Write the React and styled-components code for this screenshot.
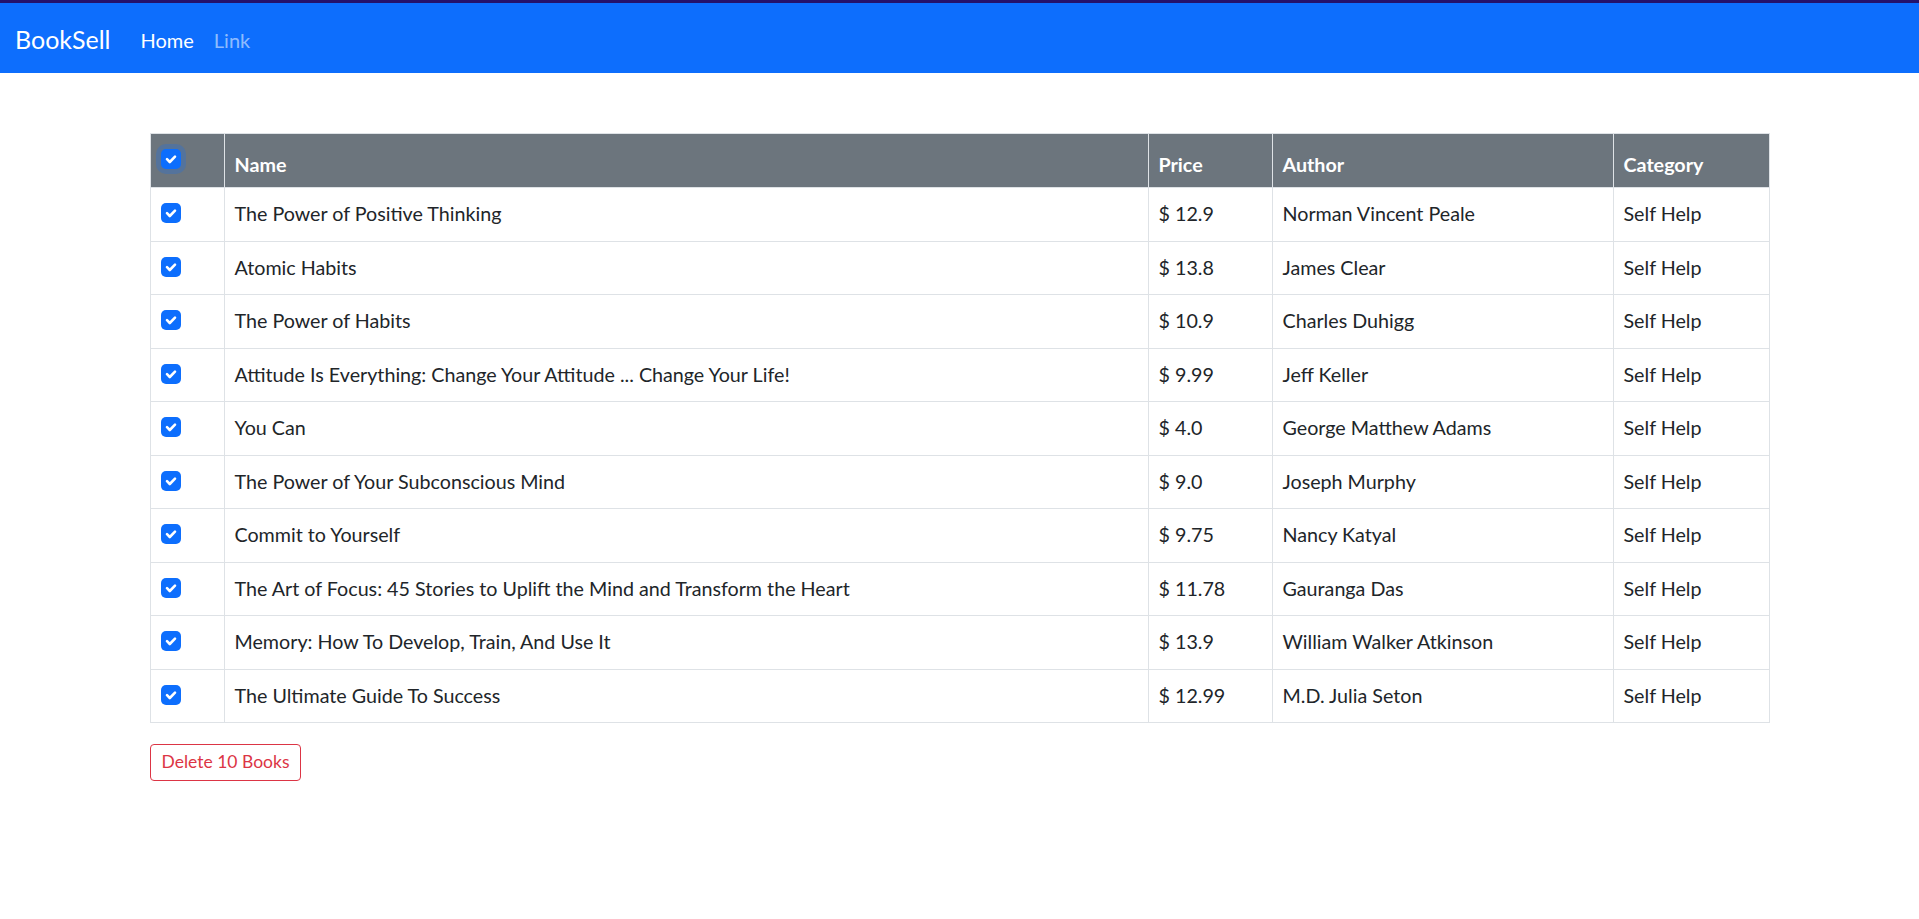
import React from 'react'
import styled, { createGlobalStyle } from 'styled-components'

const GlobalStyle = createGlobalStyle`
	html, body {
		margin: 0;
		padding: 0;
		background: #fff;
	}
	body {
		font-family: Lato, "Noto Sans", sans-serif;
		font-size: 19.7px;
		line-height: 1.5;
		color: #212529;
	}
`

const books = [
	['The Power of Positive Thinking', '12.9', 'Norman Vincent Peale'],
	['Atomic Habits', '13.8', 'James Clear'],
	['The Power of Habits', '10.9', 'Charles Duhigg'],
	['Attitude Is Everything: Change Your Attitude ... Change Your Life!', '9.99', 'Jeff Keller'],
	['You Can', '4.0', 'George Matthew Adams'],
	['The Power of Your Subconscious Mind', '9.0', 'Joseph Murphy'],
	['Commit to Yourself', '9.75', 'Nancy Katyal'],
	['The Art of Focus: 45 Stories to Uplift the Mind and Transform the Heart', '11.78', 'Gauranga Das'],
	['Memory: How To Develop, Train, And Use It', '13.9', 'William Walker Atkinson'],
	['The Ultimate Guide To Success', '12.99', 'M.D. Julia Seton'],
]

const TopLine = styled.div`
	height: 3px;
	background: #24126b;
`

const Navbar = styled.nav`
	display: flex;
	align-items: center;
	height: 70px;
	padding: 3px 15px 0;
	box-sizing: border-box;
	background: #0d6efd;
`

const Brand = styled.a`
	font-size: 25px;
	color: #fff;
	margin-right: 20px;
	text-decoration: none;
`

const NavLink = styled.a`
	font-size: 20px;
	padding: 0 10px;
	color: ${(props) => (props.active ? '#fff' : 'rgba(255, 255, 255, 0.55)')};
	text-decoration: none;
`

const Container = styled.main`
	width: 1620px;
	margin: 60px auto 0;
`

const Table = styled.table`
	width: 100%;
	table-layout: fixed;
	border-collapse: collapse;
	margin-bottom: 21px;
	border: 1px solid #dee2e6;
`

const HeadRow = styled.tr`
	height: 54px;
	background: #6c757d;
`

const Th = styled.th`
	text-align: left;
	vertical-align: bottom;
	padding: 10px 10px 7px;
	color: #fff;
	font-weight: 700;
	border-left: 1px solid #dee2e6;
	&:first-child {
		border-left: none;
		vertical-align: top;
		padding-top: 15px;
	}
`

const Row = styled.tr`
	height: 53.5px;
	border-top: 1px solid #dee2e6;
`

const Td = styled.td`
	vertical-align: top;
	padding: 11px 10px 9px;
	border-left: 1px solid #dee2e6;
	&:first-child {
		border-left: none;
		padding-top: 15px;
	}
`

const Check = styled.span`
	display: flex;
	align-items: center;
	justify-content: center;
	width: 20px;
	height: 20px;
	border-radius: 5px;
	background: #0d6efd;
	box-shadow: ${(props) => (props.focus ? '0 0 0 5px rgba(13, 110, 253, 0.25)' : 'none')};
`

const DeleteButton = styled.button`
	font-family: inherit;
	font-size: 17.5px;
	line-height: 1.5;
	height: 37px;
	padding: 0 11px;
	color: #dc3545;
	background: #fff;
	border: 1px solid #dc3545;
	border-radius: 4px;
`

const Checkbox = ({ focus }) => (
	<Check focus={focus}>
		<svg width="20" height="20" viewBox="0 0 20 20">
			<path d="M6 10.2l2.8 2.8 5.2-5.4" fill="none" stroke="#fff" strokeWidth="2.6" strokeLinecap="round" strokeLinejoin="round" />
		</svg>
	</Check>
)

export default function App() {
	return (
		<>
			<GlobalStyle />
			<TopLine />
			<Navbar>
				<Brand>BookSell</Brand>
				<NavLink active>Home</NavLink>
				<NavLink>Link</NavLink>
			</Navbar>
			<Container>
				<Table>
					<colgroup>
						<col style={{ width: 74 }} />
						<col style={{ width: 924 }} />
						<col style={{ width: 124 }} />
						<col style={{ width: 341 }} />
						<col />
					</colgroup>
					<thead>
						<HeadRow>
							<Th><Checkbox focus /></Th>
							<Th>Name</Th>
							<Th>Price</Th>
							<Th>Author</Th>
							<Th>Category</Th>
						</HeadRow>
					</thead>
					<tbody>
						{books.map(([name, price, author]) => (
							<Row key={name}>
								<Td><Checkbox /></Td>
								<Td>{name}</Td>
								<Td>$ {price}</Td>
								<Td>{author}</Td>
								<Td>Self Help</Td>
							</Row>
						))}
					</tbody>
				</Table>
				<DeleteButton>Delete 10 Books</DeleteButton>
			</Container>
		</>
	)
}
